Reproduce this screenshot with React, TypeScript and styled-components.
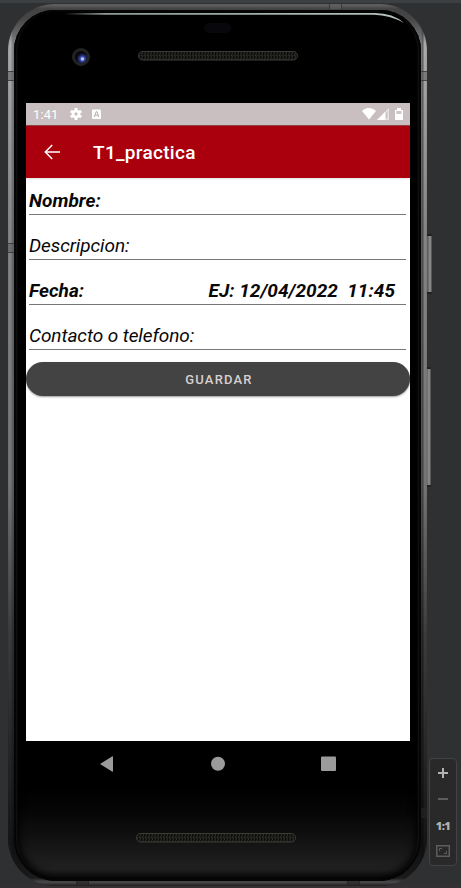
import React from 'react';
import styled, { createGlobalStyle } from 'styled-components';

const GlobalStyle = createGlobalStyle`
  * { box-sizing: border-box; }
  html, body { margin: 0; padding: 0; background: #2f3032; overflow: hidden; }
  body { font-family: Roboto, "Liberation Sans", sans-serif; }
`;

const Stage = styled.main`
  position: relative;
  width: 461px;
  height: 888px;
  padding: 4px 0 0 8px;
  background: linear-gradient(#3d4043 0 3px, #2f3032 3px 885px, #343033 885px);
`;

const Chassis = styled.div`
  position: relative;
  width: 419px;
  height: 882px;
  padding: 6px 6px 5px;
  border-radius: 46px 46px 47px 47px;
  background:
    linear-gradient(90deg, #0000 0 3px, #0003 4px, #0004 6px 413px, #0007 415px, #0000 416px),
    linear-gradient(#8b8c8c 0, #5a5a5a 5px, #606060 15px, #aaa 40px, #9b9b9b 110px, #848484 230px, #747474 480px, #3c3c3c 630px, #262626 750px, #151515 840px, #242424 874px, #666 878px, #2c2c2c 882px);
  box-shadow: inset 0 0 1px #1a1a1a88;
`;

const Glass = styled.div`
  position: relative;
  display: flex;
  flex-direction: column;
  width: 407px;
  height: 871px;
  padding-left: 12px;
  border-radius: 41px 41px 42px 42px;
  background: linear-gradient(#000 0 775px, #050505 800px, #121212 830px, #212121 860px, #181818 867px, #000 871px);
  box-shadow: inset 0 0 0 2px #050505, inset 4px 0 2px -1px #151515, inset -4px 0 2px -1px #151515, inset 0 0 9px 5px #000;
`;

const Glint = styled.svg`
  position: absolute;
  left: 48px;
  top: 2px;
`;

const TopBezel = styled.header`
  position: relative;
  height: 93px;
  flex: none;
`;

const Sensor = styled.span`
  position: absolute;
  left: 178px;
  top: 13px;
  width: 27px;
  height: 10px;
  border-radius: 5px;
  background: #08080c;
`;

const Camera = styled.span`
  position: absolute;
  left: 46px;
  top: 38px;
  width: 18px;
  height: 18px;
  border-radius: 50%;
  border: 3px solid #242323;
  background: radial-gradient(circle at 62% 66%, #c4ceff 0 1px, #4558b8 2px, #1b2560 4px, #08080c 6px);
`;

const Speaker = styled.svg<{ $bottom?: boolean }>`
  position: absolute;
  left: ${p => (p.$bottom ? 110 : 112)}px;
  top: ${p => (p.$bottom ? 92 : 41)}px;
`;

const Screen = styled.section`
  display: flex;
  flex-direction: column;
  flex: none;
  width: 384px;
  height: 638px;
  background: #fff;
`;

const StatusBar = styled.div`
  display: flex;
  align-items: center;
  height: 22px;
  padding: 0 6px 0 7px;
  background: #c9bfc0;
  color: #fff;
  font-size: 13px;
  letter-spacing: .1px;
`;

const Clock = styled.span`
  width: 36px;
  line-height: 22px;
  padding-top: 1px;
`;

const StatusGlyphs = styled.svg<{ $end?: boolean }>`
  flex: none;
  margin-left: ${p => (p.$end ? 'auto' : 0)};
`;

const AppBar = styled.div`
  display: flex;
  align-items: center;
  height: 53px;
  padding-left: 18px;
  background: #aa000e;
  border-top: 1px solid #8e4349;
  box-shadow: 0 1px 2px #0002;
  color: #fff;
`;

const BackButton = styled.button`
  display: flex;
  width: 49px;
  padding: 0;
  border: 0;
  background: none;
`;

const Title = styled.h1`
  margin: 1px 0 0;
  font-size: 19px;
  font-weight: 500;
  line-height: 24px;
  letter-spacing: .3px;
`;

const Form = styled.div`
  display: flex;
  flex-direction: column;
`;

const Field = styled.div<{ $bold?: boolean }>`
  display: flex;
  align-items: flex-end;
  justify-content: space-between;
  height: 45px;
  margin: 0 4px 0 3px;
  padding: 0 11px 2px 0;
  border-bottom: 1px solid #777;
  color: #090808;
  font-size: 19px;
  font-style: italic;
  font-weight: ${p => (p.$bold ? 700 : 400)};
  letter-spacing: ${p => (p.$bold ? 0.03 : -0.08)}px;
  line-height: 23px;
  white-space: pre;
  &:first-child { height: 37px; }
`;

const SaveButton = styled.button`
  height: 34px;
  margin-top: 12px;
  padding: 1px 0 0 2px;
  border: 0;
  border-radius: 17px;
  background: #434343;
  box-shadow: 0 1px 2px #0006;
  color: #d8cfd0;
  font: 500 13px Roboto, sans-serif;
  letter-spacing: 1.17px;
`;

const BottomBezel = styled.footer`
  position: relative;
  flex: 1;
  width: 384px;
`;

const NavBar = styled.nav`
  display: flex;
  height: 45px;
`;

const SideKey = styled.span<{ $top: number; $height: number; $left: number }>`
  position: absolute;
  left: ${p => p.$left}px;
  top: ${p => p.$top}px;
  width: 5px;
  height: ${p => p.$height}px;
  border: solid #202020;
  border-width: 2px 0;
  border-radius: 0 2px 2px 0;
  background: linear-gradient(90deg, #555, #777 2px, #999 3px, #444);
`;

const AntennaBand = styled.span<{ $x: number; $y: number; $across?: boolean; $dark?: boolean }>`
  position: absolute;
  left: ${p => p.$x}px;
  top: ${p => p.$y}px;
  width: ${p => (p.$across ? 13 : 6)}px;
  height: ${p => (p.$across ? 5 : 10)}px;
  border: solid #22222299;
  border-width: ${p => (p.$across ? '0 1px' : '1px 0')};
  background: ${p => (p.$dark ? '#24242499' : '#60606099')};
`;

const ZoomPanel = styled.aside`
  position: absolute;
  left: 429px;
  top: 758px;
  display: flex;
  flex-direction: column;
  align-items: center;
  width: 28px;
  height: 108px;
  padding-top: 1px;
  border: 1px solid #424344;
  border-radius: 4px;
  background: #292929;
`;

const ZoomButton = styled.button`
  display: flex;
  align-items: center;
  justify-content: center;
  width: 26px;
  height: 26px;
  padding: 0;
  border: 0;
  background: none;
  color: #b0b2b3;
  font: 800 11px "Open Sans", sans-serif;
  letter-spacing: -.6px;
`;

function SpeakerGrille({ bottom = false }: { bottom?: boolean }) {
  const id = bottom ? 'meshBottom' : 'meshTop';
  return (
    <Speaker $bottom={bottom} width="160" height="10">
      <defs>
        <pattern id={id} width="3" height="4" patternUnits="userSpaceOnUse">
          <rect width="3" height="4" fill="#0c0c0b" />
          <path d="M.5 0 1.5 2 .5 4M2 0v1" stroke="#3c3a33" strokeWidth=".8" fill="none" />
        </pattern>
      </defs>
      <rect x=".5" y=".5" width="159" height="8.5" rx="4.2" fill={`url(#${id})`} stroke="#3a3a36" />
    </Speaker>
  );
}

const fields = [
  { label: 'Nombre:', bold: true },
  { label: 'Descripcion:' },
  { label: 'Fecha:', bold: true, hint: 'EJ: 12/04/2022  11:45' },
  { label: 'Contacto o telefono:' },
];

export default function App() {
  return (
    <>
      <GlobalStyle />
      <Stage>
        <SideKey $left={427} $top={234} $height={60} />
        <SideKey $left={426} $top={367} $height={120} />
        <Chassis>
          <AntennaBand $x={0} $y={67} />
          <AntennaBand $x={413} $y={67} />
          <AntennaBand $x={0} $y={239} />
          <AntennaBand $x={413} $y={804} $dark />
          <AntennaBand $x={321} $y={0} $across />
          <AntennaBand $x={68} $y={877} $across $dark />
          <AntennaBand $x={339} $y={877} $across $dark />
          <Glass>
            <Glint width="345" height="13">
              <defs>
                <linearGradient id="glint">
                  <stop stopColor="#8f9b98" stopOpacity="0" />
                  <stop offset=".12" stopColor="#8f9b98" />
                  <stop offset="1" stopColor="#b7c3c1" />
                </linearGradient>
              </defs>
              <path d="M2 1H313Q331 1 342 11Q328 3 312 2.7H2Z" fill="url(#glint)" />
            </Glint>
            <TopBezel>
              <Sensor />
              <Camera />
              <SpeakerGrille />
            </TopBezel>
            <Screen>
              <StatusBar>
                <Clock>1:41</Clock>
                <StatusGlyphs width="34" height="14" viewBox="0 0 34 14">
                  <g transform="translate(7 7)">
                    <circle r="3" fill="none" stroke="#fff" strokeWidth="2.7" />
                    {[0, 60, 120, 180, 240, 300].map(a => (
                      <rect key={a} x="-1.5" y="-6" width="3" height="3" fill="#fff" transform={`rotate(${a})`} />
                    ))}
                  </g>
                  <rect x="23" y="2.5" width="9" height="9.5" rx="1" fill="#fff" />
                  <path d="m25.3 10 2-5.5h.5l2 5.5M26 8.2h3.2" fill="none" stroke="#b6acad" />
                </StatusGlyphs>
                <StatusGlyphs $end width="42" height="14" viewBox="0 0 42 14">
                  <path d="M0 4C4 0 10 0 14 4L7 12.5Z" fill="#fff" />
                  <path d="M15 13 27 1v12Z" fill="#e8e4e4" />
                  <path d="M15 13 23 5v8Z" fill="#fff" />
                  <path d="M24 5.5 25.5 4v7.5H24Z" fill="#c9bfc0" />
                  <path d="M33 3h2V1h4v2h2v10h-8Z" fill="#fff" />
                  <path d="M34.3 4h5.2v3h-5.2Z" fill="#cfc6c7" />
                </StatusGlyphs>
              </StatusBar>
              <AppBar>
                <BackButton aria-label="Back">
                  <svg width="16" height="16" viewBox="0 0 16 16" fill="none" stroke="#fff" strokeWidth="1.5">
                    <path d="M8.2 1 1.3 8l6.9 7M1.5 8H16" />
                  </svg>
                </BackButton>
                <Title>T1_practica</Title>
              </AppBar>
              <Form>
                {fields.map(f => (
                  <Field key={f.label} $bold={f.bold}>
                    <span>{f.label}</span>
                    {f.hint && <span>{f.hint}</span>}
                  </Field>
                ))}
                <SaveButton>GUARDAR</SaveButton>
              </Form>
            </Screen>
            <BottomBezel>
              <NavBar>
                <svg width="384" height="45" fill="#9b9b9b">
                  <path d="M74 23 86 15.5q1-.5 1 .5v14q0 1-1 .5Z" />
                  <circle cx="192" cy="22.7" r="7" />
                  <rect x="295" y="15.5" width="15" height="14.5" rx="1" />
                </svg>
              </NavBar>
              <SpeakerGrille bottom />
            </BottomBezel>
          </Glass>
        </Chassis>
        <ZoomPanel>
          <ZoomButton aria-label="Zoom in">
            <svg width="10" height="10"><path d="M0 5H10M5 0V10" stroke="#b0b2b3" strokeWidth="2" /></svg>
          </ZoomButton>
          <ZoomButton aria-label="Zoom out">
            <svg width="10" height="2"><path d="M0 1H10" stroke="#5b5d5f" strokeWidth="2" /></svg>
          </ZoomButton>
          <ZoomButton>1:1</ZoomButton>
          <ZoomButton aria-label="Zoom to fit">
            <svg width="14" height="12" fill="none" stroke="#5b5d5f">
              <rect x=".75" y=".75" width="12.5" height="10.5" strokeWidth="1.5" />
              <path d="M3.5 6V3.5H6M8 8.5h2.5V6" />
            </svg>
          </ZoomButton>
        </ZoomPanel>
      </Stage>
    </>
  );
}
